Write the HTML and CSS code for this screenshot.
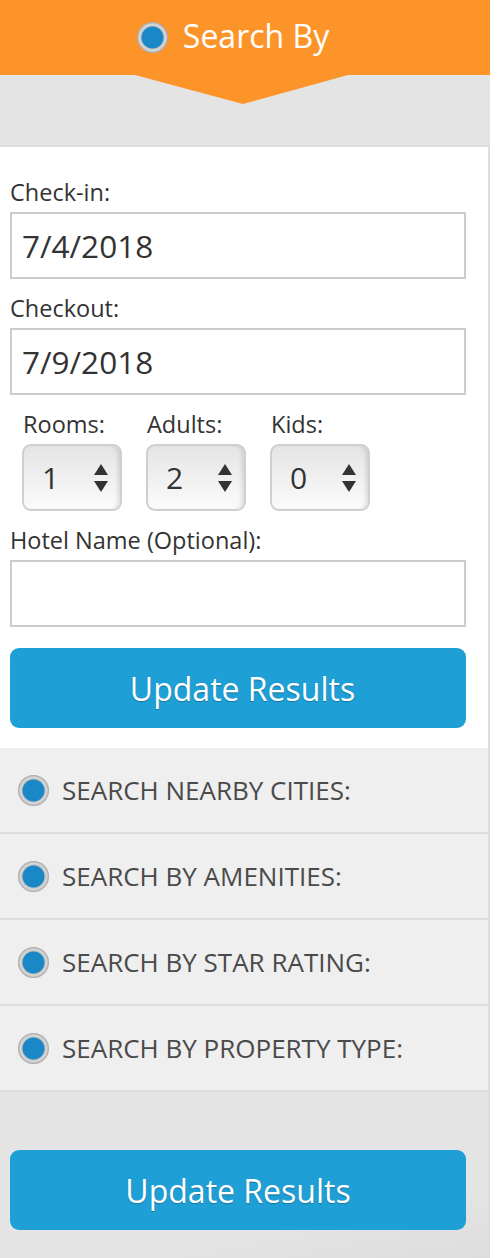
FILE: index.html
```html
<!DOCTYPE html>
<html>
<head>
<meta charset="utf-8">
<link rel="stylesheet" href="styles.css">
</head>
<body>
<div class="panel">
  <div class="header">
    <span class="radio"></span>
    <span class="header-title">Search By</span>
  </div>
  <div class="band">
    <svg class="pointer" width="490" height="30" viewBox="0 0 490 30"><polygon points="135,0 348,0 243,29" fill="#fd9429"/></svg>
  </div>
  <div class="form">
    <label class="lbl">Check-in:</label>
    <div class="input">7/4/2018</div>
    <label class="lbl gap">Checkout:</label>
    <div class="input">7/9/2018</div>
    <div class="counts">
      <div class="count">
        <label class="lbl">Rooms:</label>
        <div class="select"><span>1</span><svg class="arrows" width="14" height="28" viewBox="0 0 14 28"><polygon points="7,0 14,11 0,11" fill="#333"/><polygon points="0,17 14,17 7,28" fill="#333"/></svg></div>
      </div>
      <div class="count">
        <label class="lbl">Adults:</label>
        <div class="select"><span>2</span><svg class="arrows" width="14" height="28" viewBox="0 0 14 28"><polygon points="7,0 14,11 0,11" fill="#333"/><polygon points="0,17 14,17 7,28" fill="#333"/></svg></div>
      </div>
      <div class="count">
        <label class="lbl">Kids:</label>
        <div class="select"><span>0</span><svg class="arrows" width="14" height="28" viewBox="0 0 14 28"><polygon points="7,0 14,11 0,11" fill="#333"/><polygon points="0,17 14,17 7,28" fill="#333"/></svg></div>
      </div>
    </div>
    <label class="lbl gap">Hotel Name (Optional):</label>
    <div class="input"></div>
    <button class="btn first">Update Results</button>
  </div>
  <div class="row"><span class="radio small"></span><span class="row-text">SEARCH NEARBY CITIES:</span></div>
  <div class="row"><span class="radio small"></span><span class="row-text">SEARCH BY AMENITIES:</span></div>
  <div class="row"><span class="radio small"></span><span class="row-text">SEARCH BY STAR RATING:</span></div>
  <div class="row"><span class="radio small"></span><span class="row-text">SEARCH BY PROPERTY TYPE:</span></div>
  <div class="footer">
    <button class="btn">Update Results</button>
  </div>
</div>
</body>
</html>
```
FILE: styles.css
```css
html, body {
  margin: 0;
  padding: 0;
  background: #fff;
}
body {
  font-family: "Open Sans", "Noto Sans", sans-serif;
  color: #333;
}
.panel {
  width: 490px;
}
.header {
  height: 75px;
  background: #fd9429;
  display: flex;
  align-items: center;
  justify-content: center;
  gap: 15px;
  padding-right: 24px;
  box-sizing: border-box;
}
.header-title {
  color: #fff;
  font-size: 32px;
  line-height: 1;
  margin-top: -3px;
}
.radio {
  width: 31px;
  height: 31px;
  border-radius: 50%;
  box-sizing: border-box;
  background: radial-gradient(circle, #1a87c6 0, #1a87c6 10.5px, #c4c4c4 11.5px, #d9d9d9 13px, #a4a4a4 15.5px);
  flex: none;
}
.band {
  height: 70px;
  background: #e4e4e4;
  position: relative;
  box-sizing: border-box;
}
.pointer {
  position: absolute;
  left: 0;
  top: 0;
  display: block;
}
.form {
  background: #fff;
  border-top: 2px solid #ddd;
  border-right: 2px solid #ddd;
  padding: 33px 22px 20px 10px;
  display: flex;
  flex-direction: column;
}
.lbl {
  display: block;
  font-size: 23.5px;
  line-height: 24px;
  margin-bottom: 8px;
  color: #333;
}
.lbl.gap {
  margin-top: 17px;
}
.input {
  height: 67px;
  border: 2px solid #ccc;
  box-sizing: border-box;
  font-size: 31.5px;
  line-height: 63px;
  padding-left: 10px;
  color: #333;
}
.counts {
  display: flex;
  gap: 24px;
  padding-left: 12px;
  margin-top: 17px;
}
.count .lbl {
  padding-left: 1px;
}
.select {
  width: 100px;
  height: 67px;
  box-sizing: border-box;
  border: 2px solid #cfcfcf;
  border-radius: 9px;
  background: linear-gradient(#e4e4e4, #f0f0f0 50%, #fbfbfb);
  box-shadow: inset -4px 0 4px -2px rgba(0,0,0,0.12);
  display: flex;
  align-items: center;
  justify-content: space-between;
  padding: 0 12px 0 18px;
  font-size: 30px;
  color: #333;
}
.arrows {
  display: block;
}
.btn {
  display: block;
  width: 100%;
  height: 80px;
  border: 0;
  border-radius: 9px;
  background: #1e9fd6;
  color: #fff;
  font-family: "Open Sans", "Noto Sans", sans-serif;
  font-size: 32px;
  text-shadow: 0 1px 1px rgba(0,0,0,0.25);
  padding: 0;
  margin: 0;
}
.btn.first {
  margin-top: 21px;
  padding-left: 9px;
}
.row {
  height: 84px;
  background: #efefef;
  border-bottom: 2px solid #ddd;
  border-right: 2px solid #ddd;
  display: flex;
  align-items: center;
  padding-left: 18px;
  gap: 13px;
}
.row-text {
  font-size: 26px;
  color: #4a4a4a;
  margin-top: 0;
}
.footer {
  background: linear-gradient(170deg, #e4e4e4 70%, #dcdcdc);
  border-right: 2px solid #ddd;
  padding: 58px 22px 40px 10px;
}
```
